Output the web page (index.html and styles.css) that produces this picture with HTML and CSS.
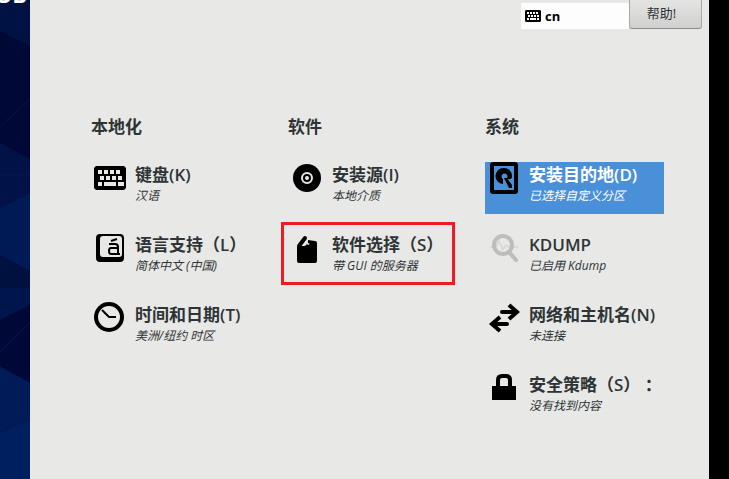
FILE: index.html
```html
<!DOCTYPE html>
<html lang="zh-CN">
<head>
<meta charset="utf-8">
<title>安装信息摘要</title>
<link rel="stylesheet" href="styles.css">
</head>
<body>
<div class="screen">
  <aside class="sidebar">
    <svg class="facets" viewBox="0 0 30 479" preserveAspectRatio="none" aria-hidden="true">
      <path fill="#001243" d="M0 0h30v46L0 31z"/>
      <path fill="#000835" d="M0 31l30 15v113L0 143z"/>
      <path fill="#001247" d="M0 143l30 16v34L0 208z"/>
      <path fill="#001a55" d="M0 208l30-15v78L0 255z"/>
      <path fill="#00103f" d="M0 255l30 16v17H0z"/>
      <path fill="#00154c" d="M0 288h30v17L0 320z"/>
      <path fill="#000838" d="M0 320l30-15v78L0 367z"/>
      <path fill="#001b58" d="M0 367l30 16v36L0 433z"/>
      <path fill="#001f5e" d="M0 433l30-14v60H0z"/>
      <path fill="none" stroke="#04205c" stroke-width=".6" d="M0 127l30-28M0 352l30-30M0 367l30 16M0 175h30"/>
    </svg>
    <span class="brand">OB</span>
  </aside>
  <main class="hub">
    <header class="topbar">
      <div class="layout-indicator">
        <svg width="16" height="12" viewBox="0 0 32 24" aria-hidden="true"><path fill="#000" fill-rule="evenodd" d="M2 0h28l2 2v20l-2 2H2l-2-2V2zM4 4v4h4V4zm6 0v4h4V4zm6 0v4h4V4zm6 0v4h4V4zM6 10v4h4v-4zm6 0v4h4v-4zm6 0v4h4v-4zm6 0v4h4v-4zM4 16v4h4v-4zm6 0v4h12v-4zm14 0v4h4v-4z"/></svg>
        <span>cn</span>
      </div>
      <button class="help" type="button">帮助!</button>
    </header>
    <div class="columns">
      <section class="column">
        <h2>本地化</h2>
        <button class="spoke" type="button">
          <svg class="icon" viewBox="0 0 32 32" aria-hidden="true"><path fill-rule="evenodd" d="M2 4h28l2 2v20l-2 2H2l-2-2V6zM4 8v4h4V8zm6 0v4h4V8zm6 0v4h4V8zm6 0v4h4V8zM6 14v4h4v-4zm6 0v4h4v-4zm6 0v4h4v-4zm6 0v4h4v-4zM4 20v4h4v-4zm6 0v4h12v-4zm14 0v4h6v-4z"/></svg>
          <span class="label"><span class="title">键盘(K)</span><span class="status">汉语</span></span>
        </button>
        <button class="spoke" type="button">
          <svg class="icon" viewBox="0 0 32 32" aria-hidden="true"><path fill-rule="evenodd" d="M6 2h20q4 0 4 4v20q0 4-4 4H6q-4 0-4-4V6q0-4 4-4zM9 4Q6 4 6 7v15q0 3 3 3h16q3 0 3-3V7q0-3-3-3z"/><path fill="none" stroke="#000" stroke-width="2" d="M17 9l6-2M15 12h6q3 0 3 3v7M24 16h-7q-2 0-2 3t2 3h9"/></svg>
          <span class="label"><span class="title">语言支持（L）</span><span class="status">简体中文 (中国)</span></span>
        </button>
        <button class="spoke" type="button">
          <svg class="icon" viewBox="0 0 32 32" aria-hidden="true"><circle cx="15" cy="15" r="13" fill="none" stroke="#000" stroke-width="4"/><path fill="none" stroke="#000" stroke-width="2" d="M8 8l7 7h7"/></svg>
          <span class="label"><span class="title">时间和日期(T)</span><span class="status">美洲/纽约 时区</span></span>
        </button>
      </section>
      <section class="column">
        <h2>软件</h2>
        <button class="spoke" type="button">
          <svg class="icon" viewBox="0 0 32 32" aria-hidden="true"><circle cx="16" cy="16" r="14"/><circle cx="16" cy="16" r="5" fill="none" stroke="#e8e8e6" stroke-width="2"/><circle cx="16" cy="16" r="2" fill="#e8e8e6"/></svg>
          <span class="label"><span class="title">安装源(I)</span><span class="status">本地介质</span></span>
        </button>
        <button class="spoke marked" type="button">
          <svg class="icon" viewBox="0 0 32 32" aria-hidden="true"><path d="M6 15l1-1h6q2 0 3-2l1 1 2-1-2-1v-3l7 1q2 0 2 2v18q0 2-2 2H8q-2 0-2-2z"/><path fill="none" stroke="#000" stroke-width="4" stroke-linecap="round" d="M8 14l6-8"/></svg>
          <span class="label"><span class="title">软件选择（S）</span><span class="status">带 GUI 的服务器</span></span>
        </button>
      </section>
      <section class="column">
        <h2>系统</h2>
        <button class="spoke selected" type="button">
          <svg class="icon" viewBox="0 0 32 32" aria-hidden="true"><path fill-rule="evenodd" d="M5 0h22q3 0 3 3v26q0 3-3 3H5q-3 0-3-3V3q0-3 3-3zM6 4v24h20V4z"/><path fill-rule="evenodd" d="M16 6a8 8 0 0 1 8 8q0 2-1 3h-5a3 3 0 1 0-3 0v5a8 8 0 0 1 1-16z"/><path d="M16 16l3 0 5 7v3h-3z"/></svg>
          <span class="label"><span class="title">安装目的地(D)</span><span class="status">已选择自定义分区</span></span>
        </button>
        <button class="spoke" type="button">
          <svg class="icon" viewBox="0 0 32 32" aria-hidden="true"><path fill="none" stroke="#d9d9d7" stroke-width="2" d="M2 15h6l3-6 4 8 3-4 3 2h9"/><circle cx="15" cy="13" r="9" fill="none" stroke="#bdbdbb" stroke-width="4"/><path fill="none" stroke="#bdbdbb" stroke-width="4" stroke-linecap="round" d="M21 20l7 8"/></svg>
          <span class="label"><span class="title">KDUMP</span><span class="status">已启用 Kdump</span></span>
        </button>
        <button class="spoke" type="button">
          <svg class="icon" viewBox="0 0 32 32" aria-hidden="true"><g fill="none" stroke="#000" stroke-width="4"><path stroke-linecap="round" d="M14 10h14M19 22H5"/><path d="M21 3l8 7-8 7M12 15l-8 7 8 7"/></g></svg>
          <span class="label"><span class="title">网络和主机名(N)</span><span class="status">未连接</span></span>
        </button>
        <button class="spoke" type="button">
          <svg class="icon" viewBox="0 0 32 32" aria-hidden="true"><path d="M4 14h24v14H4z"/><path fill="none" stroke="#000" stroke-width="4" d="M10 15V8q0-4 4-4h4q4 0 4 4v7"/></svg>
          <span class="label"><span class="title">安全策略（S） ：</span><span class="status">没有找到内容</span></span>
        </button>
      </section>
    </div>
  </main>
</div>
</body>
</html>
```
FILE: styles.css
```css
*,
*::after {
  box-sizing: border-box;
}

body {
  margin: 0;
  background: #000;
  color: #2e3436;
  font-family: "Open Sans", "Noto Sans CJK SC", sans-serif;
}

button {
  font: inherit;
  color: inherit;
}

.screen {
  display: flex;
  min-height: 100vh;
  padding-right: 20px;
}

.sidebar {
  position: relative;
  flex: 0 0 30px;
  overflow: hidden;
  background: #000835;
}

.facets {
  position: absolute;
  width: 100%;
  height: 100%;
}

.brand {
  position: absolute;
  top: -21px;
  right: 3px;
  color: #fff;
  font-size: 22px;
  font-weight: bold;
  line-height: 30px;
}

.hub {
  flex: 1;
  background: #e8e8e6;
}

.topbar {
  display: flex;
  justify-content: flex-end;
  align-items: flex-end;
  height: 29px;
  padding-right: 7px;
}

.layout-indicator {
  display: flex;
  align-items: center;
  gap: 4px;
  width: 108px;
  height: 26px;
  padding-left: 4px;
  background: #fdfdfd;
  color: #000;
  font-size: 13px;
  font-weight: bold;
}

.help {
  width: 73px;
  height: 29px;
  padding: 0 8px 4px 0;
  border: 1px solid #a8a8a6;
  border-top: 0;
  border-bottom: 1px solid #8c8c8a;
  border-radius: 0 0 3px 3px;
  background: linear-gradient(#e4e4e2, #d0d0ce);
  font-size: 13px;
}

.columns {
  display: grid;
  grid-template-columns: repeat(3, 1fr);
  gap: 18px;
  padding: 85px 45px 0 61px;
}

.column {
  display: flex;
  flex-direction: column;
  gap: 18px;
}

h2 {
  margin: 0 0 4px;
  font-size: 17px;
  font-weight: 600;
  line-height: 26px;
}

.spoke {
  position: relative;
  display: flex;
  align-items: flex-start;
  gap: 9px;
  height: 52px;
  padding: 0 0 0 3px;
  border: 0;
  background: none;
  text-align: left;
  white-space: nowrap;
}

.icon {
  flex: none;
  width: 32px;
  height: 32px;
}

.label {
  display: flex;
  flex-direction: column;
}

.title {
  font-size: 17px;
  font-weight: 600;
  line-height: 26px;
}

.status {
  font-size: 12px;
  font-style: italic;
  line-height: 16px;
}

.selected {
  background: #4a90d9;
  color: #fff;
}

.marked::after {
  content: "";
  position: absolute;
  top: -10px;
  left: -7px;
  width: 174px;
  height: 63px;
  border: 3px solid #ed1c24;
}
```
